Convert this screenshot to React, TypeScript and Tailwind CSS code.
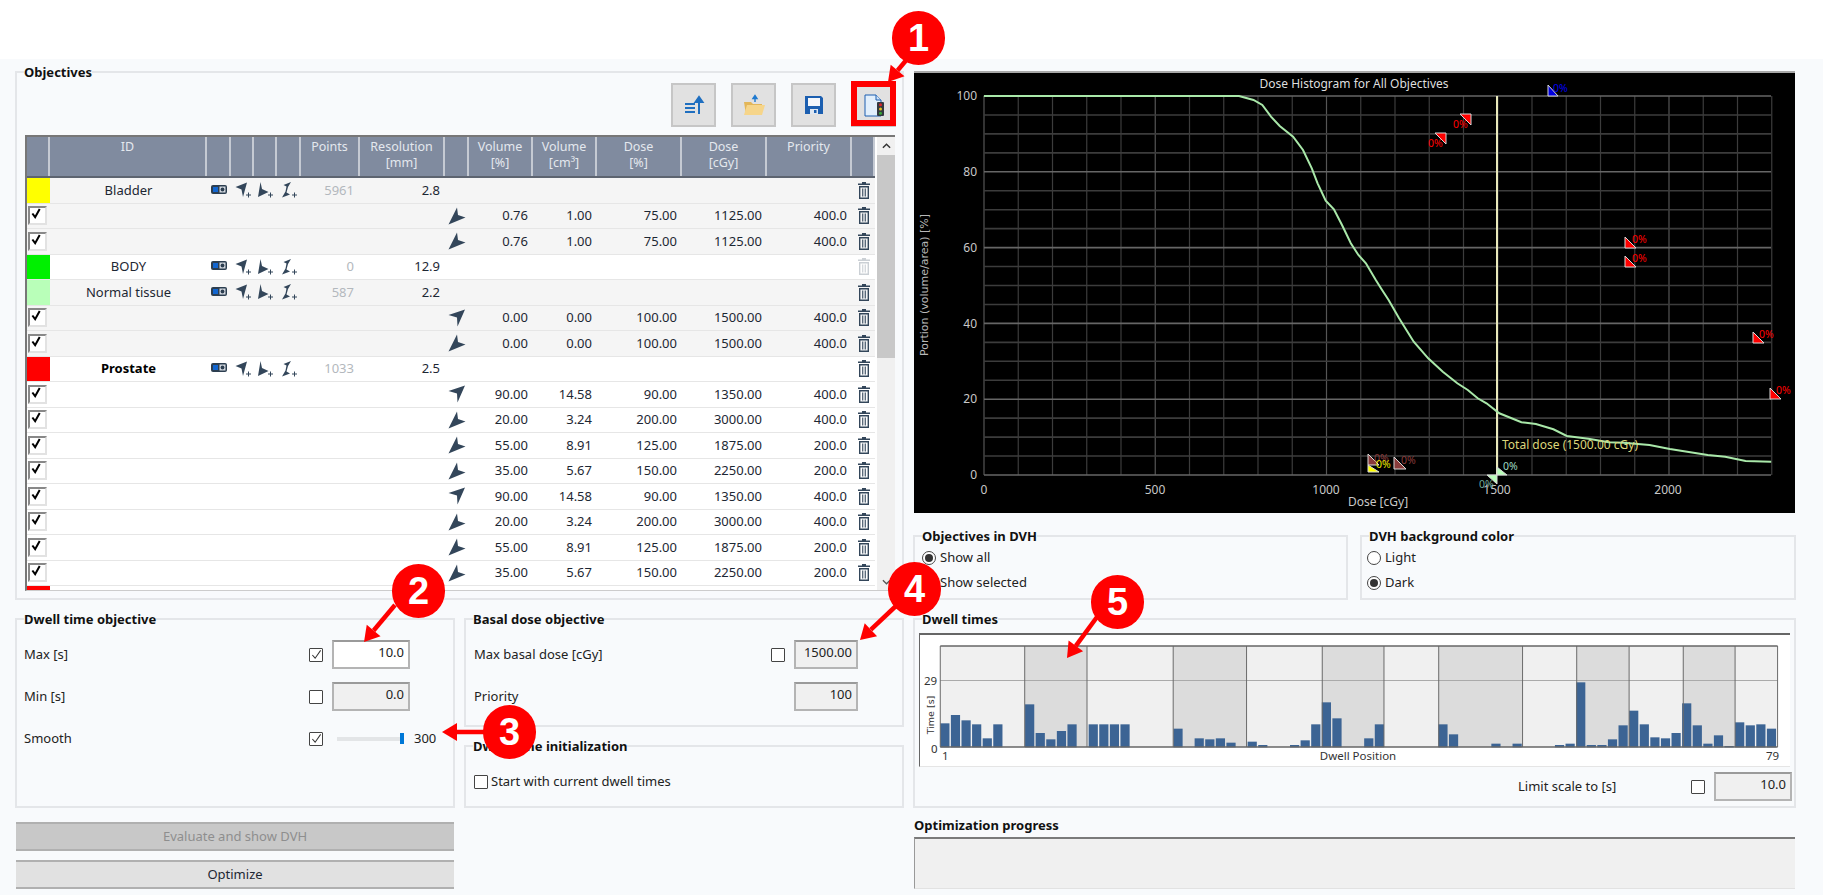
import React from 'react'

const COLS = 'grid-cols-[23px_157px_24px_23px_23px_24px_59px_85px_24px_64px_64px_85px_85px_85px_23px]'

type GroupRow = { kind: 'group'; color: string; id: string; points: string; res: string; bold?: boolean; dimTrash?: boolean; bg: string }
type ObjRow = { kind: 'obj'; dir: 'up' | 'down'; vol: string; cc: string; dose: string; cgy: string; pri: string; bg: string }

const GRAY = 'bg-[#f5f5f5]'
const WHITE = 'bg-white'

const rows: (GroupRow | ObjRow)[] = [
  { kind: 'group', color: 'bg-[#ffff00]', id: 'Bladder', points: '5961', res: '2.8', bg: GRAY },
  { kind: 'obj', dir: 'down', vol: '0.76', cc: '1.00', dose: '75.00', cgy: '1125.00', pri: '400.0', bg: GRAY },
  { kind: 'obj', dir: 'down', vol: '0.76', cc: '1.00', dose: '75.00', cgy: '1125.00', pri: '400.0', bg: GRAY },
  { kind: 'group', color: 'bg-[#00f000]', id: 'BODY', points: '0', res: '12.9', dimTrash: true, bg: WHITE },
  { kind: 'group', color: 'bg-[#b9ffb9]', id: 'Normal tissue', points: '587', res: '2.2', bg: GRAY },
  { kind: 'obj', dir: 'up', vol: '0.00', cc: '0.00', dose: '100.00', cgy: '1500.00', pri: '400.0', bg: GRAY },
  { kind: 'obj', dir: 'down', vol: '0.00', cc: '0.00', dose: '100.00', cgy: '1500.00', pri: '400.0', bg: GRAY },
  { kind: 'group', color: 'bg-[#ff0000]', id: 'Prostate', points: '1033', res: '2.5', bold: true, bg: WHITE },
  { kind: 'obj', dir: 'up', vol: '90.00', cc: '14.58', dose: '90.00', cgy: '1350.00', pri: '400.0', bg: WHITE },
  { kind: 'obj', dir: 'down', vol: '20.00', cc: '3.24', dose: '200.00', cgy: '3000.00', pri: '400.0', bg: WHITE },
  { kind: 'obj', dir: 'down', vol: '55.00', cc: '8.91', dose: '125.00', cgy: '1875.00', pri: '200.0', bg: WHITE },
  { kind: 'obj', dir: 'down', vol: '35.00', cc: '5.67', dose: '150.00', cgy: '2250.00', pri: '200.0', bg: WHITE },
  { kind: 'obj', dir: 'up', vol: '90.00', cc: '14.58', dose: '90.00', cgy: '1350.00', pri: '400.0', bg: WHITE },
  { kind: 'obj', dir: 'down', vol: '20.00', cc: '3.24', dose: '200.00', cgy: '3000.00', pri: '400.0', bg: WHITE },
  { kind: 'obj', dir: 'down', vol: '55.00', cc: '8.91', dose: '125.00', cgy: '1875.00', pri: '200.0', bg: WHITE },
  { kind: 'obj', dir: 'down', vol: '35.00', cc: '5.67', dose: '150.00', cgy: '2250.00', pri: '200.0', bg: WHITE },
]

const headers: [string, string?][] = [
  [''], ['ID'], [''], [''], [''], [''], ['Points'], ['Resolution', '[mm]'], [''],
  ['Volume', '[%]'], ['Volume', '[cm³]'], ['Dose', '[%]'], ['Dose', '[cGy]'], ['Priority'], [''],
]

// heights read off the screenshot, zoomed y of the bar top (457 is the baseline)
const barTops = [
  385, 360, 376, 388, 430, 388, 457, 457, 328, 414, 433, 408, 388, 457, 388, 388, 388, 388, 457, 457,
  457, 457, 401, 457, 430, 433, 430, 443, 457, 440, 450, 457, 457, 450, 436, 388, 322, 370, 457, 457,
  430, 388, 457, 457, 457, 457, 457, 388, 418, 457, 457, 457, 446, 457, 446, 457, 457, 457, 450, 446,
  262, 450, 450, 433, 391, 347, 388, 427, 430, 414, 325, 391, 446, 421, 453, 382, 391, 388, 401,
]
const bandEdges = [52, 197, 304, 452, 578, 708, 814, 908, 1052, 1145, 1235, 1328, 1417, 1490]

const curve: [number, number][] = [
  [127, 288], [565, 288], [590, 300], [605, 315], [620, 350], [635, 378], [658, 410], [675, 450], [690, 505],
  [700, 550], [714, 602], [728, 628], [742, 675], [757, 730], [770, 765], [783, 790], [800, 840], [810, 868],
  [822, 900], [840, 955], [865, 1025], [890, 1075], [915, 1115], [940, 1150], [958, 1170], [975, 1195],
  [990, 1210], [1012, 1240], [1050, 1267], [1075, 1272], [1105, 1288], [1128, 1308], [1165, 1316], [1200, 1327],
  [1225, 1328], [1270, 1335], [1305, 1347], [1370, 1365], [1400, 1370], [1435, 1383], [1479, 1385],
]
const curvePoints = curve.map(([x, y]) => `${(910 + x / 1.7174).toFixed(1)},${(y / 3).toFixed(1)}`).join(' ')

function Check({ className }: { className?: string }) {
  return (
    <svg viewBox="0 0 12 12" className={className}>
      <path d="M1.5 6.5 L4.5 10 L10.5 1.5" fill="none" stroke="currentColor" strokeWidth="1.1" />
    </svg>
  )
}

function FormCheck({ checked }: { checked?: boolean }) {
  return (
    <div className="w-[14px] h-[14px] shrink-0 bg-white border border-[#444] rounded-[1px] flex items-center justify-center text-[#333]">
      {checked && <Check className="w-[11px] h-[11px]" />}
    </div>
  )
}

function RowCheck() {
  return (
    <div className="w-[19px] h-[19px] ml-px bg-white border-2 border-t-[#888] border-l-[#888] border-r-[#e2e2e2] border-b-[#e2e2e2]">
      <svg viewBox="0 0 12 12" className="w-[11px] h-[11px] ml-px">
        <path d="M1.5 6 L4.5 10 L9.5 1" fill="none" stroke="#000" strokeWidth="2.2" />
      </svg>
    </div>
  )
}

function Radio({ on, label }: { on?: boolean; label: string }) {
  return (
    <div className="flex items-center h-[25px] gap-[4px] text-[13px] text-[#222]">
      <div className="w-[14px] h-[14px] rounded-full bg-white border border-[#444] flex items-center justify-center">
        {on && <div className="w-[8px] h-[8px] rounded-full bg-[#333]" />}
      </div>
      {label}
    </div>
  )
}

function NumBox({ value, width, active }: { value: string; width: string; active?: boolean }) {
  return (
    <div className={`${width} ${active ? 'bg-white' : 'bg-[#f0f0f0]'} h-[29px] shrink-0 border-2 border-[#b4b4b4] border-t-[#9a9a9a] pr-[4px] text-right text-[13px] leading-[20px] text-[#222]`}>
      {value}
    </div>
  )
}

function Group({ title, className, children }: { title: string; className?: string; children: React.ReactNode }) {
  return (
    <fieldset className={`border-2 border-[#e4e6e9] min-w-0 ${className ?? ''}`}>
      <legend className="ml-[7px] font-bold text-[13px] leading-[18px] text-[#111]">{title}</legend>
      {children}
    </fieldset>
  )
}

function Trash({ dim }: { dim?: boolean }) {
  return (
    <svg viewBox="0 0 12 17" className={`w-[12px] h-[17px] ${dim ? 'opacity-25' : ''}`}>
      <path d="M4 0h4v1.5h4V3H0V1.5h4z" fill="#33465a" />
      <path d="M1 4h10v13H1z M2.4 5.4v10.2h7.2V5.4z" fill="#33465a" fillRule="evenodd" />
      <path d="M4.2 6.5h1.1v8H4.2z M6.7 6.5h1.1v8H6.7z" fill="#33465a" />
    </svg>
  )
}

function DartUp({ className }: { className?: string }) {
  return (
    <svg viewBox="0 0 18 18" className={className}>
      <path d="M17 0.5 L0.5 6 L9 8.5 L9.5 17.5 Z" fill="#33465a" />
    </svg>
  )
}

function DartDown({ className }: { className?: string }) {
  return (
    <svg viewBox="0 0 18 18" className={className}>
      <path d="M9 0.5 L10 8 L17.5 10.5 L0.5 17.5 Z" fill="#33465a" />
    </svg>
  )
}

function PlusIcon({ kind }: { kind: 'up' | 'down' | 'both' }) {
  return (
    <svg viewBox="0 0 16 16" className="w-[16px] h-[16px]">
      {kind === 'up' && <path d="M12 0.5 L0.5 5 L6.5 7.5 L8 15 Z" fill="#33465a" />}
      {kind === 'down' && <path d="M3.5 0 L5 7 L11.5 10 L1 15 Z" fill="#33465a" />}
      {kind === 'both' && (
        <path d="M10 0 L2.5 3 L5.5 4.5 L4.5 9.5 L1 15.5 L9 12.5 L5.5 10.5 L7 5 Z" fill="#33465a" />
      )}
      <path d="M11 13h5M13.5 10.5v5" stroke="#33465a" strokeWidth="1" />
    </svg>
  )
}

function Pill() {
  return (
    <svg viewBox="0 0 16 9" className="w-[16px] h-[9px] -mt-[2px]">
      <rect width="16" height="9" rx="2" fill="#2c3e50" />
      <rect x="2" y="2" width="5" height="5" fill="#1266d0" />
      <rect x="8.5" y="1.5" width="6" height="6" fill="#d4d9e0" />
      <circle cx="11.5" cy="4.5" r="1.9" fill="#2c3e50" />
    </svg>
  )
}

function ToolButton({ children }: { children: React.ReactNode }) {
  return (
    <button className="w-[45px] h-[44px] bg-[#e1e1e1] border-2 border-[#c6c6c6] flex items-center justify-center">
      {children}
    </button>
  )
}

function ObjectivesTable() {
  return (
    <div className="mt-[8px] ml-[8px] w-[870px] h-[456px] flex border-t-2 border-l-2 border-b border-[#777] border-b-[#ccc] overflow-hidden bg-white">
      <div className="w-[848px] shrink-0">
        <div className={`grid ${COLS} h-[41px] bg-[#808b9f] border-b-2 border-[#5d6470]`}>
          {headers.map(([a, b], i) => (
            <div key={i} className="border-r-2 border-[#c5cad3] text-center text-[12.5px] leading-[16px] pt-[2px] text-[#e4e8ee]">
              <div>{a}</div>
              {b && <div>{b}</div>}
            </div>
          ))}
        </div>
        {rows.map((r, i) =>
          r.kind === 'group' ? (
            <div key={i} className={`grid ${COLS} h-[25.5px] items-center text-[13px] text-[#1d2733] border-b border-[#e6e6e6] ${r.bg}`}>
              <div className={`h-full ${r.color}`} />
              <div className={`text-center ${r.bold ? 'font-bold text-black' : ''}`}>{r.id}</div>
              <div className="flex justify-center"><Pill /></div>
              <div className="flex justify-start pl-[4px]"><PlusIcon kind="up" /></div>
              <div className="flex justify-start pl-[3px]"><PlusIcon kind="down" /></div>
              <div className="flex justify-start pl-[4px]"><PlusIcon kind="both" /></div>
              <div className="text-right pr-[6px] text-[#b3b8bd]">{r.points}</div>
              <div className="text-right pr-[5px]">{r.res}</div>
              <div className="col-span-6" />
              <div className="flex justify-center"><Trash dim={r.dimTrash} /></div>
            </div>
          ) : (
            <div key={i} className={`grid ${COLS} h-[25.5px] items-center text-[13px] text-[#1d2733] border-b border-[#e6e6e6] ${r.bg}`}>
              <RowCheck />
              <div className="col-span-7" />
              <div className="flex justify-center">
                {r.dir === 'up' ? <DartUp className="w-[18px] h-[18px]" /> : <DartDown className="w-[18px] h-[18px]" />}
              </div>
              <div className="text-right pr-[5px]">{r.vol}</div>
              <div className="text-right pr-[5px]">{r.cc}</div>
              <div className="text-right pr-[5px]">{r.dose}</div>
              <div className="text-right pr-[5px]">{r.cgy}</div>
              <div className="text-right pr-[5px]">{r.pri}</div>
              <div className="flex justify-center"><Trash /></div>
            </div>
          ),
        )}
        <div className="w-[23px] h-[5px] bg-[#ff0000]" />
      </div>
      <div className="w-[18px] ml-[2px] flex flex-col bg-[#f0f0f0]">
        <div className="h-[18px] flex items-center justify-center">
          <svg viewBox="0 0 10 6" className="w-[9px] h-[6px]"><path d="M1 5 L5 1 L9 5" fill="none" stroke="#333" strokeWidth="1.6" /></svg>
        </div>
        <div className="h-[203px] bg-[#c8c8c8]" />
        <div className="flex-1 flex items-end justify-center pb-[5px]">
          <svg viewBox="0 0 10 6" className="w-[9px] h-[6px]"><path d="M1 1 L5 5 L9 1" fill="none" stroke="#555" strokeWidth="1.4" /></svg>
        </div>
      </div>
    </div>
  )
}

function Marker({ pts, fill, label, lx, ly, color }: { pts: string; fill: string; label: string; lx: number; ly: number; color: string }) {
  return (
    <g>
      <polygon points={pts} fill={fill} stroke="#d8d8d8" strokeWidth="1" />
      <text x={lx} y={ly} fontSize="10.5" fill={color}>{label}</text>
    </g>
  )
}

function DvhChart() {
  const hLines = Array.from({ length: 21 }, (_, i) => i)
  const vLines = Array.from({ length: 24 }, (_, i) => i)
  return (
    <div className="ml-px mt-[12px] w-[881px] h-[442px] bg-black border-t-2 border-[#a8a8a8]">
      <svg viewBox="914 73 881 440" className="w-[881px] h-[440px] block">
        {vLines.map((i) => (
          <line key={i} x1={984 + i * 34.25} x2={984 + i * 34.25} y1={96} y2={475} stroke={i % 5 === 0 ? '#555' : '#3c3c3c'} strokeWidth="1.2" />
        ))}
        {hLines.map((i) => (
          <line key={i} x1={984} x2={1771} y1={475 - i * 18.95} y2={475 - i * 18.95} stroke={i % 4 === 0 ? '#666' : '#3c3c3c'} strokeWidth="1.6" />
        ))}
        <line x1="1497" x2="1497" y1="96" y2="475" stroke="#e9e9bb" strokeWidth="2" />
        <polyline points={curvePoints} fill="none" stroke="#a9e8a9" strokeWidth="2" />
        <text x="1354" y="88" textAnchor="middle" fontSize="12" fill="#dedede">Dose Histogram for All Objectives</text>
        {[[100, 96], [80, 172], [60, 248], [40, 324], [20, 399], [0, 475]].map(([v, y]) => (
          <text key={v} x="977" y={y + 4} textAnchor="end" fontSize="12" fill="#c8c8c8">{v}</text>
        ))}
        {[[0, 984], [500, 1155], [1000, 1326], [1500, 1497], [2000, 1668]].map(([v, x]) => (
          <text key={v} x={x} y="494" textAnchor="middle" fontSize="12" fill="#c8c8c8">{v}</text>
        ))}
        <text x="1378" y="506" textAnchor="middle" fontSize="12" fill="#c8c8c8">Dose [cGy]</text>
        <text transform="translate(928 285) rotate(-90)" textAnchor="middle" fontSize="11" fontFamily="DejaVu Sans" fill="#b8b8b8">Portion (volume/area) [%]</text>
        <text x="1502" y="449" fontSize="12" fill="#ddd67a">Total dose (1500.00 cGy)</text>
        <Marker pts="1548,85 1548,96 1558,96" fill="#0000e0" label="0%" lx={1553} ly={92} color="#0000f0" />
        <Marker pts="1471,114 1460,114 1471,125" fill="#ff0000" label="0%" lx={1453} ly={128} color="#ff0000" />
        <Marker pts="1446,133 1435,133 1446,144" fill="#ff0000" label="0%" lx={1428} ly={147} color="#ff0000" />
        <Marker pts="1625,237 1625,248 1636,248" fill="#ff0000" label="0%" lx={1632} ly={243} color="#ff0000" />
        <Marker pts="1625,256 1625,267 1636,267" fill="#ff0000" label="0%" lx={1632} ly={262} color="#ff0000" />
        <Marker pts="1753,332 1753,343 1764,343" fill="#ff0000" label="0%" lx={1759} ly={338} color="#ff0000" />
        <Marker pts="1770,388 1770,399 1781,399" fill="#ff0000" label="0%" lx={1776} ly={394} color="#ff0000" />
        <Marker pts="1368,454 1368,465 1379,465" fill="#8a3b3b" label="0%" lx={1374} ly={462} color="#8a3b3b" />
        <Marker pts="1394,457 1394,469 1406,469" fill="#8a3b3b" label="0%" lx={1401} ly={464} color="#8a3b3b" />
        <Marker pts="1368,465 1368,472 1379,472" fill="#ffff00" label="0%" lx={1376} ly={468} color="#e8e800" />
        <Marker pts="1497,467 1497,475 1507,475" fill="#b9ffb9" label="0%" lx={1503} ly={470} color="#9fd8c0" />
        <Marker pts="1487,475 1497,475 1497,484" fill="#b9ffb9" label="0%" lx={1479} ly={488} color="#6fa89a" />
      </svg>
    </div>
  )
}

function DwellChart() {
  const px = (z: number) => 910 + z / 1.7174
  const barY = (z: number) => 595 + z / 3
  return (
    <div className="mt-[5px] ml-[4px] w-[871px] h-[134px] bg-white border-t-2 border-l border-[#666] border-r-[#e5e5e5] border-b border-b-[#e5e5e5]">
      <svg viewBox="920 635 869 131" className="w-[869px] h-[131px] block">
        {bandEdges.slice(0, -1).map((e, i) => (
          <rect key={e} x={px(e)} y="646" width={px(bandEdges[i + 1]) - px(e)} height="101" fill={i % 2 ? '#dcdcdc' : '#f0f0f0'} />
        ))}
        <line x1={px(52)} x2={px(1490)} y1="680.5" y2="680.5" stroke="#aaa" strokeWidth="1" />
        {barTops.map((t, i) =>
          t < 457 ? (
            <rect key={i} x={px(52 + i * 18.2)} y={barY(t)} width="9.2" height={barY(457) - barY(t)} fill="#3c6494" />
          ) : null,
        )}
        {bandEdges.map((e) => (
          <line key={e} x1={px(e)} x2={px(e)} y1="646" y2="747" stroke="#6a6a6a" strokeWidth="1" />
        ))}
        <line x1={px(52)} x2={px(1490)} y1="646" y2="646" stroke="#666" strokeWidth="1.4" />
        <line x1={px(52)} x2={px(1490)} y1="747" y2="747" stroke="#666" strokeWidth="1.4" />
        <text x="924" y="685" fontSize="11.5" fill="#333">29</text>
        <text x="931" y="753" fontSize="11.5" fill="#333">0</text>
        <text transform="translate(934 715) rotate(-90)" textAnchor="middle" fontSize="9.5" fontFamily="DejaVu Sans" fill="#333">Time [s]</text>
        <text x="942" y="760" fontSize="11.5" fill="#333">1</text>
        <text x="1358" y="760" textAnchor="middle" fontSize="11.5" fill="#333">Dwell Position</text>
        <text x="1766" y="760" fontSize="11.5" fill="#333">79</text>
      </svg>
    </div>
  )
}

function Arrow({ tail, tip }: { tail: [number, number]; tip: [number, number] }) {
  const dx = tip[0] - tail[0]
  const dy = tip[1] - tail[1]
  const len = Math.hypot(dx, dy)
  const ux = dx / len
  const uy = dy / len
  const bx = tip[0] - ux * 15
  const by = tip[1] - uy * 15
  const head = `${tip[0]},${tip[1]} ${bx - uy * 9},${by + ux * 9} ${bx + uy * 9},${by - ux * 9}`
  return (
    <g>
      <line x1={tail[0]} y1={tail[1]} x2={bx} y2={by} stroke="#ff0000" strokeWidth="4.5" />
      <polygon points={head} fill="#ff0000" />
    </g>
  )
}

function Callout({ n, pos }: { n: number; pos: string }) {
  return (
    <div className={`absolute ${pos} w-[53px] h-[54px] rounded-full bg-[#ff0000] text-white font-bold text-[38px] leading-[54px] text-center font-['Liberation_Sans',sans-serif]`}>
      {n}
    </div>
  )
}

export default function App() {
  return (
    <div className="relative w-[1823px] h-[895px] overflow-hidden bg-white font-['Noto_Sans',sans-serif]">
      <div className="h-[59px]" />
      <div className="h-[836px] bg-[#f8fafc] pl-[15px] flex gap-[9px]">
        {/* left column */}
        <div className="w-[889px] pt-[4px] shrink-0">
          <Group title="Objectives" className="h-[537px]">
            <div className="flex justify-end gap-[15px] pr-[6px] pt-[2px]">
              <ToolButton>
                <svg viewBox="0 0 24 24" className="w-[24px] h-[24px]">
                  <path d="M3 10h10v2H3z M3 14h10v2H3z M3 18h10v2H3z" fill="#1f6fc0" />
                  <path d="M17 21V6M13.5 9 L17 4 L20.5 9 Z" stroke="#1f6fc0" strokeWidth="2" fill="#1f6fc0" />
                </svg>
              </ToolButton>
              <ToolButton>
                <svg viewBox="0 0 24 24" className="w-[24px] h-[24px]">
                  <path d="M2 9h7l2 2h9v11H4z" fill="#e3b658" />
                  <path d="M5 12h18l-3 10H2z" fill="#f6d58a" />
                  <path d="M13 9V5M11 5.5 L13 2.5 L15 5.5 Z" stroke="#1f7ad0" strokeWidth="1.4" fill="#1f7ad0" />
                </svg>
              </ToolButton>
              <ToolButton>
                <svg viewBox="0 0 24 24" className="w-[24px] h-[24px]">
                  <path d="M3 3h16l2 2v16H3z" fill="#1c5fb0" />
                  <rect x="6" y="5" width="12" height="8" fill="#f4f7fb" />
                  <rect x="8" y="16" width="8" height="5" fill="#dfe7f1" />
                  <rect x="12" y="17" width="2.5" height="3" fill="#1c5fb0" />
                </svg>
              </ToolButton>
              <div className="relative">
                <ToolButton>
                  <svg viewBox="0 0 24 24" className="w-[24px] h-[24px]">
                    <path d="M3 2h11l5 5v16H3z" fill="#e1effc" stroke="#1c5fb0" strokeWidth="1" />
                    <path d="M14 2v5h5" fill="#cfe2f6" stroke="#1c5fb0" strokeWidth="1" />
                    <rect x="15" y="9" width="7" height="14" rx="1" fill="#33393f" />
                    <circle cx="18.5" cy="11.7" r="1.5" fill="#d8262c" />
                    <circle cx="18.5" cy="16" r="1.5" fill="#e6c020" />
                    <circle cx="18.5" cy="20.3" r="1.5" fill="#3aa637" />
                  </svg>
                </ToolButton>
                <div className="absolute left-0 top-[-2px] w-[45px] h-[45px] border-[6px] border-[#ff0000]" />
              </div>
            </div>
            <ObjectivesTable />
          </Group>

          <div className="flex gap-[9px] mt-[10px]">
            <Group title="Dwell time objective" className="w-[440px] h-[198px]">
              <div className="pl-[7px] pt-[12px] flex flex-col gap-[13px] text-[13px] text-[#222]">
                <div className="flex items-center h-[29px]">
                  <div className="w-[285px]">Max [s]</div>
                  <FormCheck checked />
                  <div className="w-[9px]" />
                  <NumBox value="10.0" width="w-[78px]" active />
                </div>
                <div className="flex items-center h-[29px]">
                  <div className="w-[285px]">Min [s]</div>
                  <FormCheck />
                  <div className="w-[9px]" />
                  <NumBox value="0.0" width="w-[78px]" />
                </div>
                <div className="flex items-center h-[29px]">
                  <div className="w-[285px]">Smooth</div>
                  <FormCheck checked />
                  <div className="w-[14px]" />
                  <div className="w-[63px] h-[4px] bg-[#e3e5e7]" />
                  <div className="w-[4px] h-[11px] bg-[#0078d7]" />
                  <div className="ml-[10px]">300</div>
                </div>
              </div>
            </Group>

            <div className="w-[440px]">
              <Group title="Basal dose objective" className="h-[117px]">
                <div className="pl-[8px] pt-[12px] flex flex-col gap-[13px] text-[13px] text-[#222]">
                  <div className="flex items-center h-[29px]">
                    <div className="w-[297px]">Max basal dose [cGy]</div>
                    <FormCheck />
                    <div className="w-[9px]" />
                    <NumBox value="1500.00" width="w-[64px]" />
                  </div>
                  <div className="flex items-center h-[29px]">
                    <div className="w-[320px]">Priority</div>
                    <NumBox value="100" width="w-[64px]" />
                  </div>
                </div>
              </Group>
              <Group title="Dwell time initialization" className="h-[71px] mt-[10px]">
                <div className="pl-[8px] pt-[17px] flex items-center gap-[3px] text-[13px] text-[#222]">
                  <FormCheck />
                  Start with current dwell times
                </div>
              </Group>
            </div>
          </div>

          <button className="block mt-[14px] ml-px w-[438px] h-[29px] bg-[#c8c8c8] border-y-2 border-[#b0b0b0] text-[13px] text-[#8e8e8e]">
            Evaluate and show DVH
          </button>
          <button className="block mt-[9px] ml-px w-[438px] h-[29px] bg-[#e1e1e1] border-y-2 border-[#b0b0b0] text-[13px] text-[#1d2733]">
            Optimize
          </button>
        </div>

        {/* right column */}
        <div className="w-[883px] shrink-0">
          <DvhChart />
          <div className="flex gap-[12px] mt-[14px]">
            <Group title="Objectives in DVH" className="w-[435px] h-[73px]">
              <div className="pl-[7px]">
                <Radio on label="Show all" />
                <Radio label="Show selected" />
              </div>
            </Group>
            <Group title="DVH background color" className="w-[436px] h-[73px]">
              <div className="pl-[5px]">
                <Radio label="Light" />
                <Radio on label="Dark" />
              </div>
            </Group>
          </div>
          <Group title="Dwell times" className="h-[198px] mt-[10px]">
            <DwellChart />
            <div className="mt-[5px] flex justify-end items-center pr-[2px] text-[13px] text-[#222]">
              <div className="w-[173px]">Limit scale to [s]</div>
              <FormCheck />
              <div className="w-[9px]" />
              <NumBox value="10.0" width="w-[78px]" />
            </div>
          </Group>
          <div className="mt-[8px] ml-px font-bold text-[13px] leading-[18px] text-[#111]">Optimization progress</div>
          <div className="mt-[3px] ml-px w-[881px] h-[52px] bg-[#f0f0f0] border-t-2 border-l border-[#7a7a7a] border-l-[#999] border-b border-b-[#e2e2e2]" />
        </div>
      </div>

      {/* numbered callouts drawn over the screenshot */}
      <svg viewBox="0 0 1823 895" className="absolute inset-0 w-[1823px] h-[895px] pointer-events-none">
        <Arrow tail={[908, 58]} tip={[888, 82]} />
        <Arrow tail={[395, 605]} tip={[364, 642]} />
        <Arrow tail={[485, 732]} tip={[442, 732]} />
        <Arrow tail={[897, 605]} tip={[860, 640]} />
        <Arrow tail={[1097, 617]} tip={[1067, 658]} />
      </svg>
      <Callout n={1} pos="left-[892px] top-[11px]" />
      <Callout n={2} pos="left-[392px] top-[564px]" />
      <Callout n={3} pos="left-[483px] top-[705px]" />
      <Callout n={4} pos="left-[888px] top-[562px]" />
      <Callout n={5} pos="left-[1091px] top-[575px]" />
    </div>
  )
}
